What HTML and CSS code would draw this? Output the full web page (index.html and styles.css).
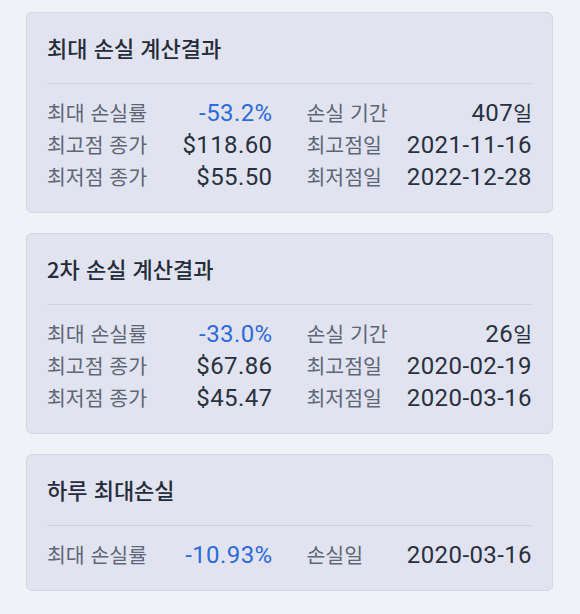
FILE: index.html
```html
<!DOCTYPE html>
<html lang="ko">
<head>
<meta charset="utf-8">
<title>손실 계산결과</title>
<link rel="stylesheet" href="styles.css">
</head>
<body>
<main class="page">
  <section class="card">
    <h2 class="card-title">최대 손실 계산결과</h2>
    <div class="stats">
      <div class="pair"><span class="label">최대 손실률</span><span class="value neg">-53.2%</span></div>
      <div class="pair"><span class="label">손실 기간</span><span class="value">407<span class="unit">일</span></span></div>
      <div class="pair"><span class="label">최고점 종가</span><span class="value">$118.60</span></div>
      <div class="pair"><span class="label">최고점일</span><span class="value">2021-11-16</span></div>
      <div class="pair"><span class="label">최저점 종가</span><span class="value">$55.50</span></div>
      <div class="pair"><span class="label">최저점일</span><span class="value">2022-12-28</span></div>
    </div>
  </section>
  <section class="card">
    <h2 class="card-title">2차 손실 계산결과</h2>
    <div class="stats">
      <div class="pair"><span class="label">최대 손실률</span><span class="value neg">-33.0%</span></div>
      <div class="pair"><span class="label">손실 기간</span><span class="value">26<span class="unit">일</span></span></div>
      <div class="pair"><span class="label">최고점 종가</span><span class="value">$67.86</span></div>
      <div class="pair"><span class="label">최고점일</span><span class="value">2020-02-19</span></div>
      <div class="pair"><span class="label">최저점 종가</span><span class="value">$45.47</span></div>
      <div class="pair"><span class="label">최저점일</span><span class="value">2020-03-16</span></div>
    </div>
  </section>
  <section class="card">
    <h2 class="card-title">하루 최대손실</h2>
    <div class="stats">
      <div class="pair"><span class="label">최대 손실률</span><span class="value neg">-10.93%</span></div>
      <div class="pair"><span class="label">손실일</span><span class="value">2020-03-16</span></div>
    </div>
  </section>
</main>
</body>
</html>
```
FILE: styles.css
```css
html, body {
  margin: 0;
  background: #f0f2f8;
}
body {
  font-family: "Noto Sans CJK KR", "Noto Sans", sans-serif;
  color: #252b39;
}
.page {
  display: flex;
  flex-direction: column;
  gap: 20px;
  padding: 12px 27px 24px 26px;
}
.card {
  background: #e1e4f0;
  border: 1px solid #d3d7e4;
  border-radius: 6px;
  padding: 20px;
}
.card-title {
  margin: 0 0 12px;
  padding-bottom: 22px;
  border-bottom: 1px solid #d0d4e1;
  font-size: 22px;
  line-height: 28px;
  font-weight: 500;
  color: #262c3a;
}
.stats {
  display: grid;
  grid-template-columns: 1fr 1fr;
  column-gap: 34px;
}
.pair {
  display: flex;
  justify-content: space-between;
  align-items: baseline;
  height: 32px;
}
.label {
  font-size: 20.5px;
  line-height: 32px;
  color: #5e6677;
}
.value {
  font-family: Roboto, "Noto Sans CJK KR", sans-serif;
  font-size: 24px;
  line-height: 32px;
  letter-spacing: 0.4px;
  color: #283040;
}
.unit {
  font-family: "Noto Sans CJK KR", sans-serif;
  font-size: 20.5px;
  letter-spacing: 0;
}
.value.neg {
  color: #2c69dc;
}
```
